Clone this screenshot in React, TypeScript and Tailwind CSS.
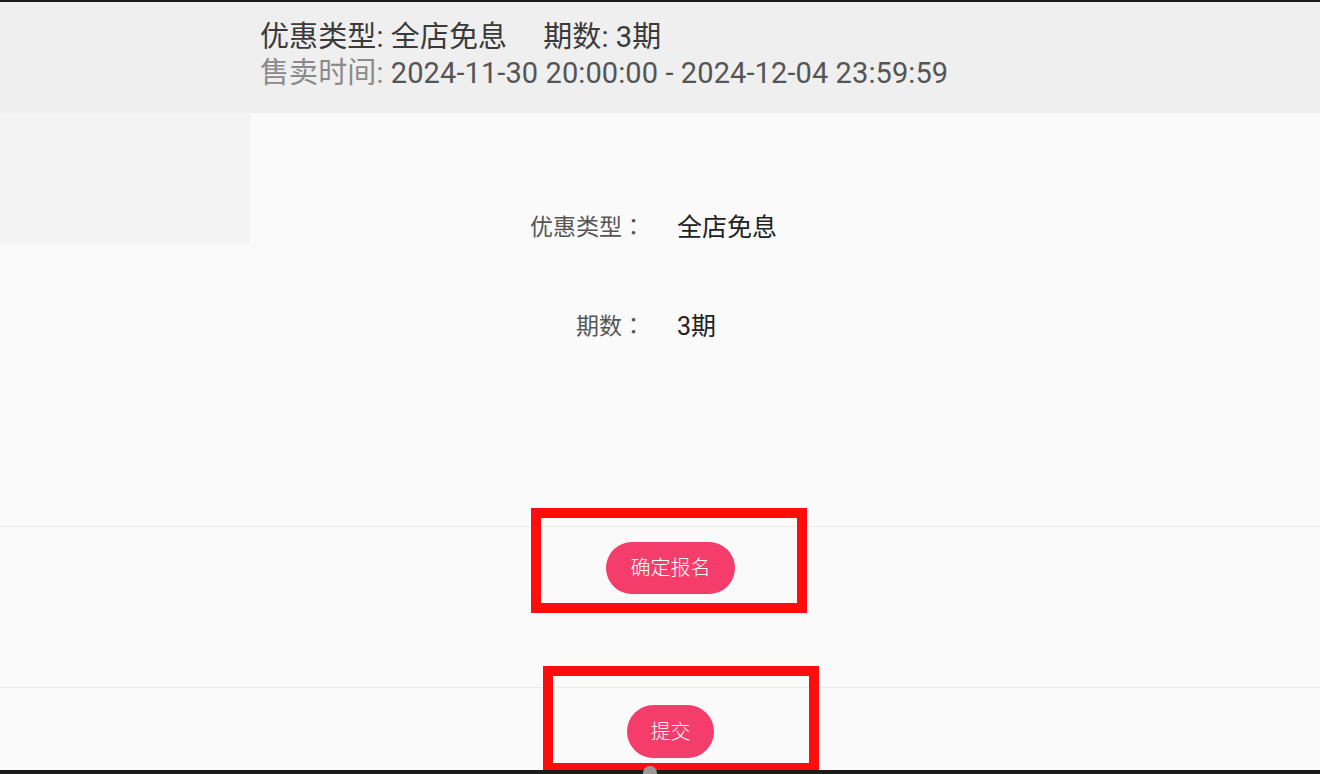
const cjk = "font-['Roboto','Noto_Sans_CJK_SC',sans-serif]";

function FormRow({ label, value, className }: { label: string; value: string; className?: string }) {
  return (
    <div className={`flex items-center leading-[36px] ${className ?? ""}`}>
      <div className="w-[395px] text-right font-['Roboto','Noto_Sans_CJK_TC',sans-serif] text-[23px] text-[#555]">
        {label}
      </div>
      <div className="pl-[32px] text-[25px] text-[#222]">{value}</div>
    </div>
  );
}

export default function App() {
  return (
    <div className={`flex h-[774px] w-[1320px] flex-col overflow-hidden bg-[#fafafa] ${cjk}`}>
      <div className="h-[2px] bg-[#1c1c1c]" />

      <header className="h-[111px] bg-[#efefef] pl-[260px] pt-[17px] text-[29px] leading-[36px] tracking-[0.1px]">
        <p className="text-[#3a3a3a]">
          优惠类型: 全店免息<span className="inline-block w-[36px]" />期数: 3期
        </p>
        <p className="text-[#555]">
          <span className="text-[#8a8a8a]">售卖时间:</span> 2024-11-30 20:00:00 - 2024-12-04 23:59:59
        </p>
      </header>

      <div className="flex h-[413px]">
        <aside className="w-[250px]">
          <div className="h-[130px] bg-[#f3f3f3]" />
        </aside>
        <main className="flex-1 pt-[97px]">
          <FormRow label="优惠类型：" value="全店免息" />
          <FormRow label="期数：" value="3期" className="mt-[63px]" />
        </main>
      </div>

      <section className="flex h-[161px] justify-center border-t border-[#ebebeb] pl-[21px] pt-[15px]">
        <div className="relative h-[52px]">
          <button
            type="button"
            className="h-[52px] w-[129px] rounded-full bg-[#f43d6b] text-[20px] font-light text-white"
          >
            确定报名
          </button>
          <div className="pointer-events-none absolute -bottom-[19px] -left-[75px] -right-[72px] -top-[34px] border-[10px] border-[#ff0d0d]" />
        </div>
      </section>

      <section className="flex flex-1 justify-center border-t border-[#ebebeb] pl-[21px] pt-[17px]">
        <div className="relative h-[53px]">
          <button
            type="button"
            className="h-[53px] w-[87px] rounded-full bg-[#f43d6b] text-[20px] font-light text-white"
          >
            提交
          </button>
          <div className="pointer-events-none absolute -bottom-[13px] -left-[84px] -right-[105px] -top-[39px] border-[10px] border-b-[8px] border-[#ff0d0d]" />
        </div>
      </section>

      <div className="relative h-[4px] bg-[#1c1c1c]">
        <div className="absolute left-[643px] top-[-4px] h-[14px] w-[14px] rounded-full bg-[#9a9a9a]" />
      </div>
    </div>
  );
}
